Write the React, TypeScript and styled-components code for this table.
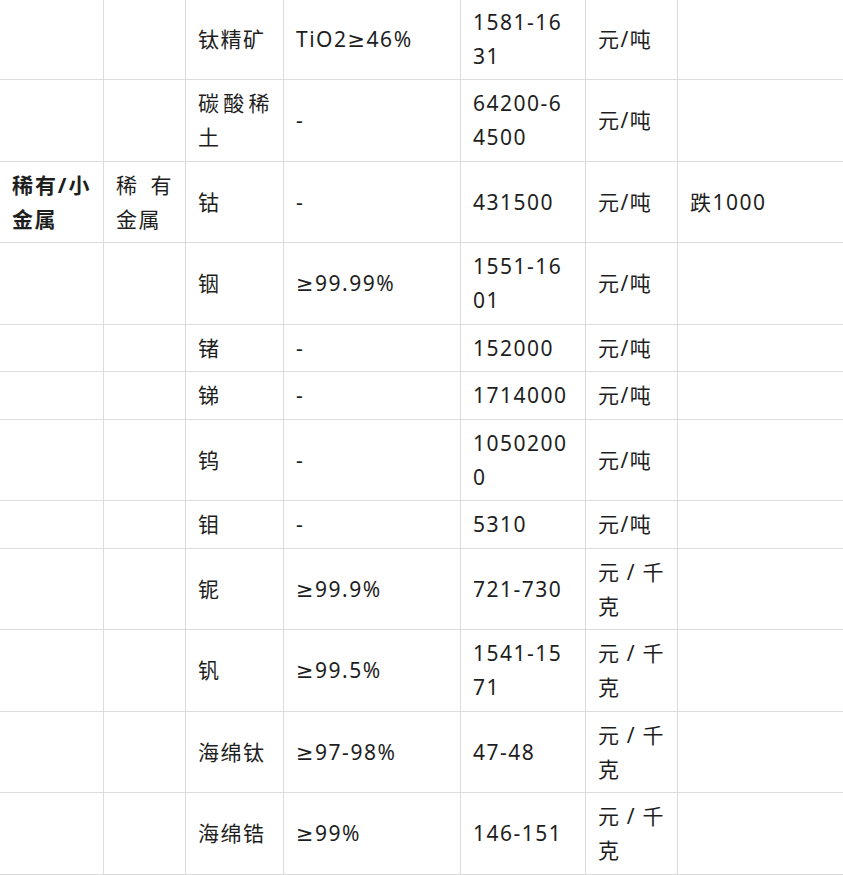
import React from "react";
import styled, { createGlobalStyle } from "styled-components";

/* ── Page reset ───────────────────────────────── */
const GlobalStyle = createGlobalStyle`
  html, body {
    margin: 0;
    padding: 0;
    background: #fff;
    overflow: hidden;
  }
`;

const Page = styled.main`
  width: 843px;
  height: 875px;
  overflow: hidden;
  background: #fff;
`;

/* Price table — fixed column widths, cropped at the edges like the source.
 * DejaVu sits before the CJK face so "≥" keeps its upright form. */
const Table = styled.table`
  border-collapse: collapse;
  table-layout: fixed;
  width: 848px;
  margin: -2.5px 0 0 -1px;
  font-family: "Noto Sans", "DejaVu Sans", "Noto Sans CJK SC", sans-serif;
  font-size: 21px;
  line-height: 34px;
  letter-spacing: 1.5px;
  color: #1e1e1e;
`;

const Cell = styled.td<{ $bold?: boolean }>`
  border: 1px solid #dcdcdc;
  padding: 6.25px 12px;
  vertical-align: middle;
  text-align: justify;
  word-break: break-all;
  font-weight: ${({ $bold }) => ($bold ? 700 : 400)};
`;

const widths = [104, 82, 98, 177, 125, 92, 170];

type Row = [string, string, string, string, string, string, string];

const rows: Row[] = [
  ["", "", "钛精矿", "TiO2≥46%", "1581-1631", "元/吨", ""],
  ["", "", "碳酸稀土", "-", "64200-64500", "元/吨", ""],
  ["稀有/小金属", "稀有金属", "钴", "-", "431500", "元/吨", "跌1000"],
  ["", "", "铟", "≥99.99%", "1551-1601", "元/吨", ""],
  ["", "", "锗", "-", "152000", "元/吨", ""],
  ["", "", "锑", "-", "1714000", "元/吨", ""],
  ["", "", "钨", "-", "10502000", "元/吨", ""],
  ["", "", "钼", "-", "5310", "元/吨", ""],
  ["", "", "铌", "≥99.9%", "721-730", "元/千克", ""],
  ["", "", "钒", "≥99.5%", "1541-1571", "元/千克", ""],
  ["", "", "海绵钛", "≥97-98%", "47-48", "元/千克", ""],
  ["", "", "海绵锆", "≥99%", "146-151", "元/千克", ""],
];

export default function App() {
  return (
    <Page>
      <GlobalStyle />
      <Table>
        <colgroup>
          {widths.map((w, i) => (
            <col key={i} style={{ width: w }} />
          ))}
        </colgroup>
        <tbody>
          {rows.map((r, i) => (
            <tr key={i}>
              {r.map((c, j) => (
                <Cell key={j} $bold={j === 0}>
                  {c}
                </Cell>
              ))}
            </tr>
          ))}
        </tbody>
      </Table>
    </Page>
  );
}
